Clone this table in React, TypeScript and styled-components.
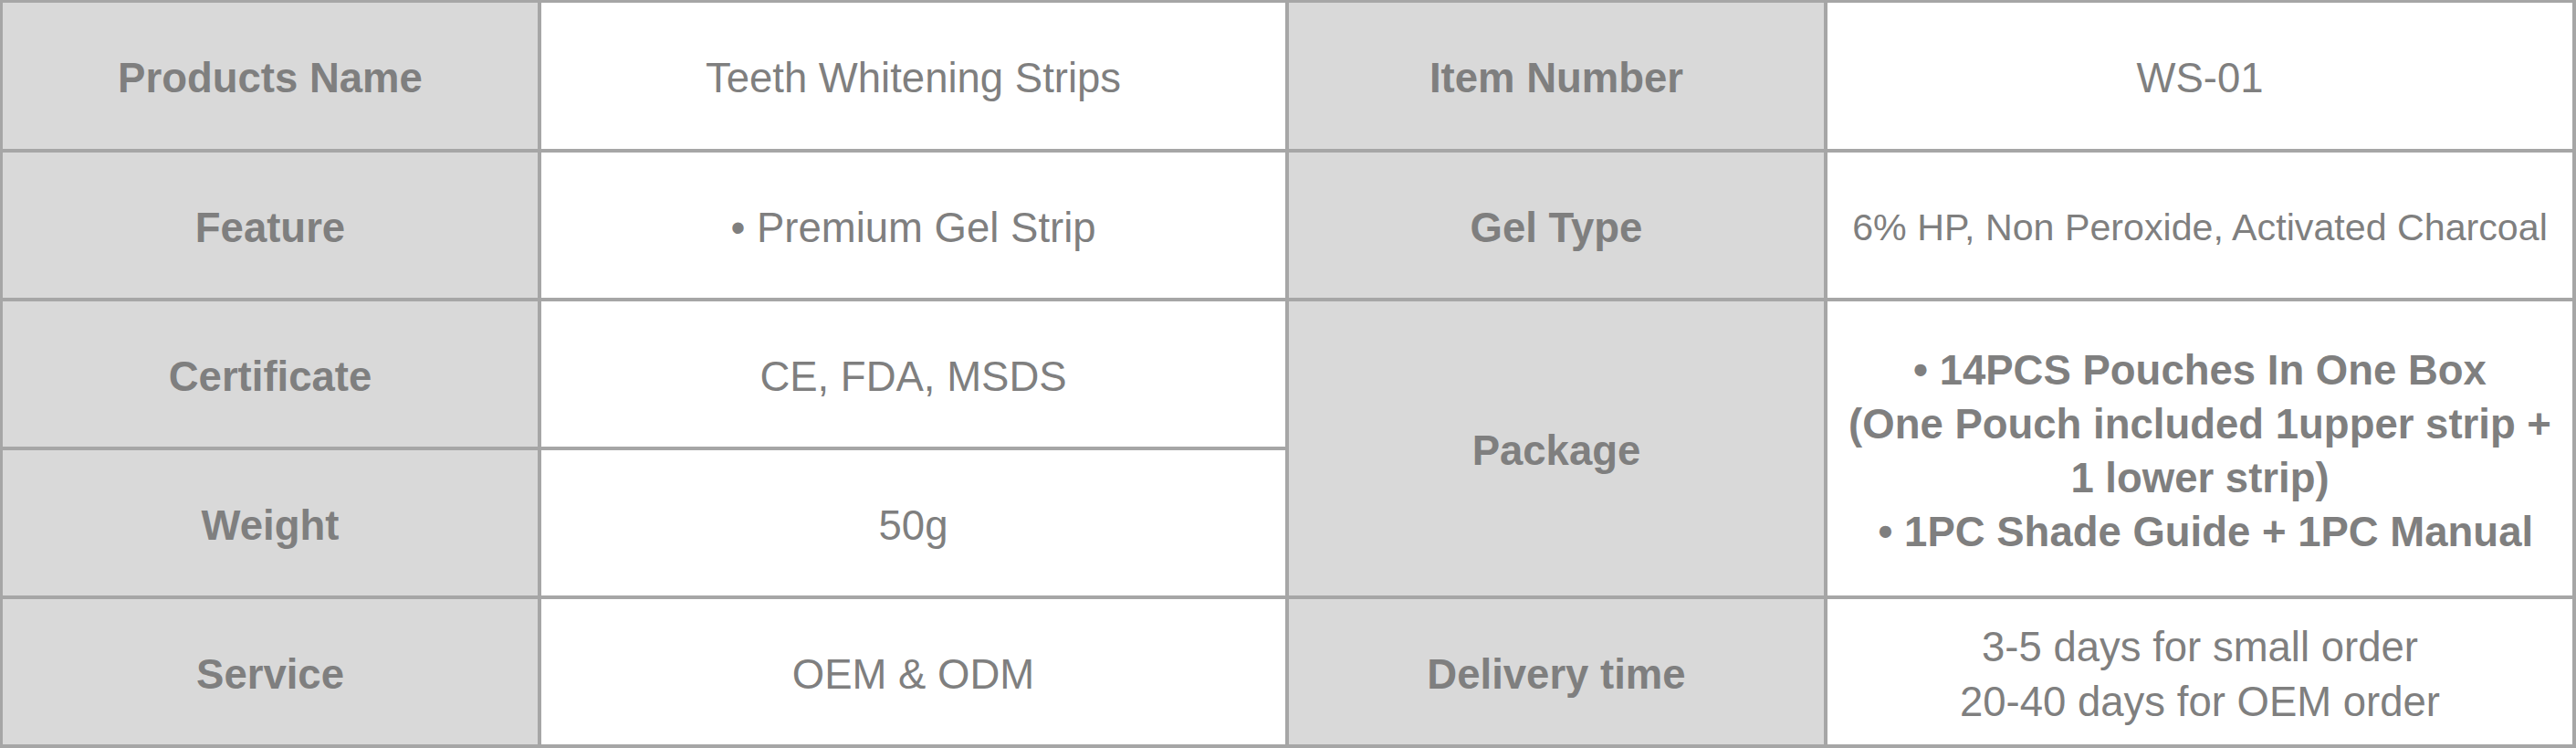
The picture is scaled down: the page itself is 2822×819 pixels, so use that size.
import React from "react";
import styled, { createGlobalStyle } from "styled-components";

const Global = createGlobalStyle`
  html, body {
    margin: 0;
    padding: 0;
    background: #ffffff;
  }
  body {
    font-family: "Liberation Sans", Arial, sans-serif;
  }
`;

const Table = styled.div`
  display: grid;
  grid-template-columns: 586px 815px 586px 816px;
  grid-template-rows: 160px 159px 159px 159px 159px;
  gap: 4px;
  padding: 3px 4px 4px 3px;
  width: 2822px;
  height: 819px;
  box-sizing: border-box;
  background: #a6a6a6;
`;

const Cell = styled.div<{ $head?: boolean; $bold?: boolean; $size?: number; $span?: number }>`
  display: flex;
  align-items: center;
  justify-content: center;
  text-align: center;
  box-sizing: border-box;
  padding-top: 6px;
  background: ${(p) => (p.$head ? "#d9d9d9" : "#ffffff")};
  color: #7f7f7f;
  font-family: "Liberation Sans", Arial, sans-serif;
  font-weight: ${(p) => (p.$head || p.$bold ? 700 : 400)};
  font-size: ${(p) => p.$size ?? 45.5}px;
  line-height: 1.3;
  white-space: nowrap;
  ${(p) => (p.$span ? `grid-row: span ${p.$span};` : "")}
`;

export default function App() {
  return (
    <>
      <Global />
      <Table>
        <Cell $head>Products Name</Cell>
        <Cell>Teeth Whitening Strips</Cell>
        <Cell $head>Item Number</Cell>
        <Cell>WS-01</Cell>

        <Cell $head>Feature</Cell>
        <Cell>• Premium Gel Strip</Cell>
        <Cell $head>Gel Type</Cell>
        <Cell $size={41.2}>6% HP, Non Peroxide, Activated Charcoal</Cell>

        <Cell $head>Certificate</Cell>
        <Cell>CE, FDA, MSDS</Cell>
        <Cell $head $span={2}>Package</Cell>
        <Cell $bold $span={2}>
          • 14PCS Pouches In One Box
          <br />
          (One Pouch included 1upper strip +
          <br />
          1 lower strip)
          <br />
          &nbsp;• 1PC Shade Guide + 1PC Manual
        </Cell>

        <Cell $head>Weight</Cell>
        <Cell>50g</Cell>

        <Cell $head>Service</Cell>
        <Cell>OEM &amp; ODM</Cell>
        <Cell $head>Delivery time</Cell>
        <Cell>
          3-5 days for small order
          <br />
          20-40 days for OEM order
        </Cell>
      </Table>
    </>
  );
}
